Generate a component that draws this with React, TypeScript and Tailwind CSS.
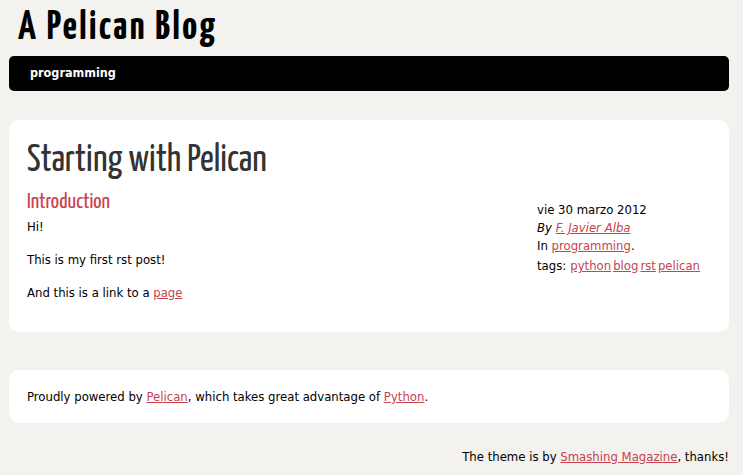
import React from "react";

const body = { fontFamily: 'Tahoma, "DejaVu Sans Condensed", "DejaVu Sans", sans-serif' };
const head = { fontFamily: '"Yanone Kaffeesatz", "Liberation Sans Narrow", "DejaVu Sans Condensed", sans-serif' };

const A = ({ children }: { children: React.ReactNode }) => (
  <a href="#" className="text-[#c74350] underline">{children}</a>
);

export default function App() {
  return (
    <div className="min-h-[475px] bg-[#f3f2ee] text-[13px] leading-[1.5] text-black" style={body}>
      <div className="ml-[9px] w-[720px]">
        <header>
          <h1 className="pl-[9px] pt-[2px] text-[41px] leading-[52px] font-bold tracking-[2.5px] text-black" style={head}>A Pelican Blog</h1>
          <nav className="mt-[2px] h-[35px] rounded-[5px] bg-black pl-[21px]">
            <a href="#" className="text-[12.5px] leading-[34px] font-bold text-white">programming</a>
          </nav>
        </header>
        <article className="mt-[29px] h-[212px] rounded-[10px] bg-white px-[18px] pt-[18px]">
          <h2 className="text-[38px] leading-[46px] text-[#333]" style={head}>Starting with Pelican</h2>
          <div className="flex">
            <div className="flex-1">
              <h3 className="mt-[4px] mb-[1px] text-[22px] leading-[28px] text-[#c74350]" style={head}>Introduction</h3>
              <p className="mb-[13px] leading-[20px]">Hi!</p>
              <p className="mb-[13px] leading-[20px]">This is my first rst post!</p>
              <p className="leading-[20px]">And this is a link to a <A>page</A></p>
            </div>
            <aside className="w-[174px] pt-[17px] leading-[18px]">
              <div>vie 30 marzo 2012</div>
              <div className="italic">By <A>F. Javier Alba</A></div>
              <div>In <A>programming</A>.</div>
              <div className="mt-[2px]">
                <span className="mr-[4px]">tags:</span>
                <span className="inline-flex gap-[2px]"><A>python</A><A>blog</A><A>rst</A><A>pelican</A></span>
              </div>
            </aside>
          </div>
        </article>
        <section className="mt-[38px] h-[53px] rounded-[10px] bg-white px-[18px] pt-[17px]">
          Proudly powered by <A>Pelican</A>, which takes great advantage of <A>Python</A>.
        </section>
        <footer className="mt-[24px] text-right">
          The theme is by <A>Smashing Magazine</A>, thanks!
        </footer>
      </div>
    </div>
  );
}
